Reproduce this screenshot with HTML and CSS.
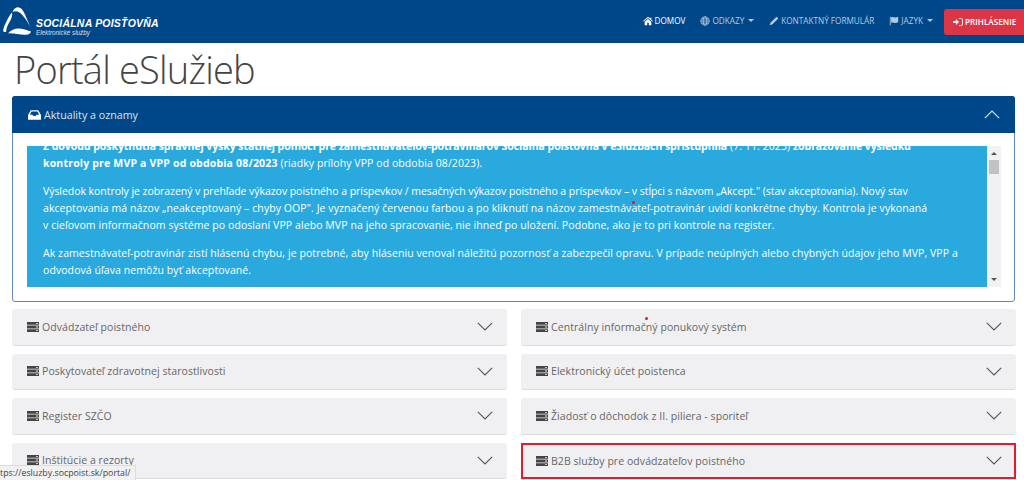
FILE: index.html
```html
<!DOCTYPE html>
<html lang="sk">
<head>
    <meta charset="UTF-8">
    <title>Portál eSlužieb</title>
    <link rel="stylesheet" href="styles.css">
</head>
<body>
    <svg class="icon-defs" width="0" height="0">
        <symbol id="i-server" viewBox="0 0 12 10">
            <path d="M0 0h12v2.800H0zM0 3.600h12v2.800H0zM0 7.200h12V10H0z"/>
            <path fill="#f0f0f2" d="M9 1h2v.8H9zM9 4.600h2v.8H9zM9 8.200h2V9H9z"/>
        </symbol>
    </svg>

    <nav class="navbar">
        <a class="brand" href="#">
            <svg class="brand-mark" viewBox="0 0 28 28" fill="#fff">
                <path d="M14.500.2C18 .2 20 3 22 7.500l5.800 13.700C24.500 14 20 8 16.500 5.500 14 3.800 11.500 3.800 9.500 5 10.500 2.500 12.300.2 14.500.2z"/>
                <path d="M9 5.500C9.800 8 8.500 11.500 6.500 15 4.800 18 3.300 21 3.200 24.500 1.500 25.500.2 25 .2 23.500c0-2.500 2-6.500 4-10.500C5.800 10 7.300 7.300 9 5.500z"/>
                <path d="M5 26.300c3-3 6.500-4.800 10.500-4.800 4.500 0 8.500 2 12.300 2.800.3 1.500-1.500 3.200-5 3.400-5.800.3-11.800-1.800-17.800-1.400z"/>
            </svg>
            <span class="brand-text">
                <span class="brand-name">SOCIÁLNA POISŤOVŇA</span>
                <span class="brand-sub">Elektronické služby</span>
            </span>
        </a>
        <ul class="nav-links">
            <li class="active">
                <svg class="nav-icon" viewBox="0 0 12 10" fill="currentColor"><path d="M6 0 0 5l.6.7L6 1.300l5.400 4.400.6-.7-2-1.700V1H8.800v1L6 0zM2 6v4h3V7.200h2V10h3V6L6 2.600 2 6z"/></svg>
                DOMOV
            </li>
            <li>
                <svg class="nav-icon" viewBox="0 0 12 12" fill="none" stroke="currentColor" stroke-width="1"><circle cx="6" cy="6" r="5"/><ellipse cx="6" cy="6" rx="2.300" ry="5"/><path d="M1 6h10M1.800 3.500h8.400M1.800 8.500h8.400"/></svg>
                ODKAZY <span class="caret"></span>
            </li>
            <li>
                <svg class="nav-icon" viewBox="0 0 12 12" fill="currentColor"><path d="M9 .8 11.200 3 4.200 10 .8 11.200 2 7.800 9 .8z"/></svg>
                KONTAKTNÝ FORMULÁR
            </li>
            <li>
                <svg class="nav-icon" viewBox="0 0 12 12" fill="currentColor"><path d="M1 1h1v10H1zM2.500 1.500c2-1 3.500.4 5 .4 1 0 2.500-.4 3.500-.9v6.500c-1 .6-2.500 1-3.500 1-1.500 0-3-1.300-5-.4z"/></svg>
                JAZYK <span class="caret"></span>
            </li>
        </ul>
        <button class="login">
            <svg class="nav-icon" viewBox="0 0 12 10" fill="currentColor"><path d="M0 3.800h3.500V1.500L7.300 5 3.500 8.500V6.200H0zM7 .5h2.500C11 .5 12 1.500 12 3v4c0 1.500-1 2.500-2.500 2.500H7v-1h2.500c.9 0 1.500-.6 1.500-1.500V3c0-.9-.6-1.500-1.500-1.500H7z"/></svg>
            PRIHLÁSENIE
        </button>
    </nav>

    <main class="page">
        <h1>Portál eSlužieb</h1>

        <section class="news">
            <header class="news-head">
                <span class="news-title">
                    <svg class="news-icon" viewBox="0 0 14 10" fill="#fff"><path d="M3 0h8l3 5v5H0V5l3-5zm.8 1.300L1.900 4.800h2.900l1 1.400h2.400l1-1.400h2.900l-1.900-3.500H3.800z"/></svg>
                    Aktuality a oznamy
                </span>
                <svg class="chevron chevron-light" viewBox="0 0 16 9"><path d="M.8 8.200 8 1l7.200 7.200"/></svg>
            </header>
            <div class="news-body">
                <div class="news-scroll">
                    <div class="news-text">
                        <p class="news-first"><strong class="tight">Z dôvodu poskytnutia správnej výšky štátnej pomoci pre zamestnávateľov-potravinárov Sociálna poisťovňa v eSlužbách sprístupnila</strong> (7. 11. 2023) <strong class="tight">zobrazovanie výsledku</strong><br><strong>kontroly pre MVP a VPP od obdobia 08/2023</strong> (riadky prílohy VPP od obdobia 08/2023).</p>
                        <p><span class="tight">Výsledok kontroly je zobrazený v prehľade výkazov poistného a príspevkov / mesačných výkazov poistného a príspevkov – v stĺpci s názvom „Akcept." (stav akceptovania). Nový stav</span><br>akceptovania má názov „neakceptovaný – chyby OOP". Je vyznačený červenou farbou a po kliknutí na názov zamestnávateľ-potravinár uvidí konkrétne chyby. Kontrola je vykonaná<br>v cieľovom informačnom systéme po odoslaní VPP alebo MVP na jeho spracovanie, nie ihneď po uložení. Podobne, ako je to pri kontrole na register.</p>
                        <p>Ak zamestnávateľ-potravinár zistí hlásenú chybu, je potrebné, aby hláseniu venoval náležitú pozornosť a zabezpečil opravu. V prípade neúplných alebo chybných údajov jeho MVP, VPP a<br>odvodová úľava nemôžu byť akceptované.</p>
                    </div>
                    <div class="scrollbar">
                        <span class="arrow-up"></span>
                        <span class="thumb"></span>
                        <span class="arrow-down"></span>
                    </div>
                </div>
            </div>
        </section>

        <div class="services">
            <div class="service"><span class="service-name"><svg class="service-icon"><use href="#i-server"/></svg>Odvádzateľ poistného</span><svg class="chevron" viewBox="0 0 16 9"><path d="M.8 .8 8 8l7.200-7.200"/></svg></div>
            <div class="service"><span class="service-name"><svg class="service-icon"><use href="#i-server"/></svg>Centrálny informačný ponukový systém</span><svg class="chevron" viewBox="0 0 16 9"><path d="M.8 .8 8 8l7.200-7.200"/></svg></div>
            <div class="service"><span class="service-name"><svg class="service-icon"><use href="#i-server"/></svg>Poskytovateľ zdravotnej starostlivosti</span><svg class="chevron" viewBox="0 0 16 9"><path d="M.8 .8 8 8l7.200-7.200"/></svg></div>
            <div class="service"><span class="service-name"><svg class="service-icon"><use href="#i-server"/></svg>Elektronický účet poistenca</span><svg class="chevron" viewBox="0 0 16 9"><path d="M.8 .8 8 8l7.200-7.200"/></svg></div>
            <div class="service"><span class="service-name"><svg class="service-icon"><use href="#i-server"/></svg>Register SZČO</span><svg class="chevron" viewBox="0 0 16 9"><path d="M.8 .8 8 8l7.200-7.200"/></svg></div>
            <div class="service"><span class="service-name"><svg class="service-icon"><use href="#i-server"/></svg>Žiadosť o dôchodok z II. piliera - sporiteľ</span><svg class="chevron" viewBox="0 0 16 9"><path d="M.8 .8 8 8l7.200-7.200"/></svg></div>
            <div class="service"><span class="service-name"><svg class="service-icon"><use href="#i-server"/></svg>Inštitúcie a rezorty</span><svg class="chevron" viewBox="0 0 16 9"><path d="M.8 .8 8 8l7.200-7.200"/></svg></div>
            <div class="service service-marked"><span class="service-name"><svg class="service-icon"><use href="#i-server"/></svg>B2B služby pre odvádzateľov poistného</span><svg class="chevron" viewBox="0 0 16 9"><path d="M.8 .8 8 8l7.200-7.200"/></svg></div>
        </div>
    </main>

    <span class="dot dot-text"></span>
    <span class="dot dot-card"></span>
    <div class="status-url">tps://esluzby.socpoist.sk/portal/</div>
</body>
</html>
```

FILE: styles.css
```css
html, body {
    height: 480px;
    overflow: hidden;
}
body {
    margin: 0;
    font-family: "Open Sans", "Noto Sans", sans-serif;
    background: #fff;
    color: #444;
}
.icon-defs {
    position: absolute;
}

/* navbar */
.navbar {
    display: flex;
    align-items: center;
    height: 43px;
    padding-left: 3px;
    background: #00478a;
    color: #fff;
}
.brand {
    display: flex;
    align-items: center;
    gap: 5px;
    color: #fff;
    text-decoration: none;
}
.brand-mark {
    width: 28px;
    height: 28px;
    margin-top: -1px;
}
.brand-text {
    display: flex;
    flex-direction: column;
    margin-top: 9px;
}
.brand-name {
    font-family: "Liberation Sans", sans-serif;
    font-size: 10.500px;
    line-height: 12px;
    font-weight: bold;
    font-style: italic;
    letter-spacing: .2px;
}
.brand-sub {
    font-family: "Liberation Sans", sans-serif;
    font-size: 6.300px;
    line-height: 7px;
    font-style: italic;
    color: #d5e0ec;
}
.nav-links {
    display: flex;
    gap: 15px;
    margin: 0 11px 2px auto;
    padding: 0;
    list-style: none;
    font-size: 8.200px;
    color: #b6c9de;
}
.nav-links li {
    display: flex;
    align-items: center;
    gap: 2px;
    white-space: nowrap;
}
.nav-links .active {
    color: #fff;
}
.nav-icon {
    width: 10px;
    height: 10px;
}
.caret {
    width: 0;
    height: 0;
    margin-left: 2px;
    border-style: solid;
    border-width: 3px 3px 0;
    border-color: currentColor transparent transparent;
}
.login {
    display: flex;
    align-items: center;
    gap: 2px;
    height: 26px;
    width: 80px;
    padding: 0 0 0 9px;
    border: 0;
    border-radius: 3px 0 0 3px;
    background: #dc3545;
    color: #fff;
    font-family: inherit;
    font-size: 8.200px;
    font-weight: 600;
    white-space: nowrap;
}

/* page */
.page {
    padding: 0 9px 0 12px;
}
h1 {
    margin: 0;
    height: 53px;
    padding-left: 2px;
    font-size: 38px;
    line-height: 53px;
    font-weight: 300;
    letter-spacing: -.8px;
    color: #444;
}
.news {
    height: 206px;
    box-sizing: border-box;
    border: 1px solid #5f8ab5;
    border-radius: 3px;
}
.news-head {
    display: flex;
    align-items: center;
    justify-content: space-between;
    height: 37px;
    margin: -1px -1px 0;
    padding: 0 15px 0 16px;
    border-radius: 3px 3px 0 0;
    background: #00478a;
    color: #dbe5ef;
    font-size: 10.700px;
}
.news-title {
    display: flex;
    align-items: center;
    gap: 3px;
}
.news-icon {
    width: 13px;
    height: 10px;
}
.news-body {
    padding: 13px 13px 0 14px;
}
.news-scroll {
    display: flex;
    height: 141px;
    overflow: hidden;
}
.news-text {
    flex: 1;
    padding: 0 16px;
    background: #2aa9df;
    color: #fff;
    font-size: 10.500px;
    line-height: 17px;
    letter-spacing: .08px;
    white-space: nowrap;
    overflow: hidden;
}
.news-text p {
    margin: 0 0 11px;
}
.news-text strong {
    letter-spacing: .18px;
}
.news-text .tight {
    letter-spacing: -.05px;
}
.news-text .news-first {
    margin-top: -8px;
}
.scrollbar {
    display: flex;
    flex-direction: column;
    align-items: center;
    width: 14px;
    padding-top: 6px;
    box-sizing: border-box;
    background: #f1f0f2;
}
.arrow-up, .arrow-down {
    width: 0;
    height: 0;
    border-style: solid;
    border-color: transparent;
}
.arrow-up {
    border-width: 0 3px 3px;
    border-bottom-color: #555;
}
.arrow-down {
    margin-top: auto;
    margin-bottom: 6px;
    border-width: 3px 3px 0;
    border-top-color: #555;
}
.thumb {
    width: 10px;
    height: 14px;
    margin-top: 5px;
    background: #c2c1c4;
}

/* service rows */
.services {
    display: grid;
    grid-template-columns: 495px 495px;
    column-gap: 14px;
    row-gap: 8px;
    margin-top: 7px;
}
.service {
    display: flex;
    align-items: center;
    justify-content: space-between;
    height: 36.500px;
    box-sizing: border-box;
    padding: 0 14px 0 15px;
    border-radius: 3px;
    background: #f0f0f2;
    border-bottom: 1px solid #dcdcde;
    font-size: 10.500px;
    letter-spacing: .06px;
    color: #666;
}
.service-name {
    display: flex;
    align-items: center;
    gap: 3px;
}
.service-icon {
    width: 12px;
    height: 10px;
    fill: #444;
}
.service-marked {
    border-radius: 0;
    border-bottom: 0;
    box-shadow: inset 0 0 0 2px #e8192c;
}
.chevron {
    width: 16px;
    height: 9px;
    fill: none;
    stroke: #555;
    stroke-width: 1.100;
}
.chevron-light {
    stroke: #dbe5ef;
}

/* things lying over the page */
.dot {
    position: absolute;
    width: 3px;
    height: 3px;
    border-radius: 50%;
    background: #e8102a;
}
.dot-text {
    left: 632px;
    top: 201px;
}
.dot-card {
    left: 645px;
    top: 317px;
}
.status-url {
    position: absolute;
    left: 0;
    bottom: 0;
    width: 136px;
    height: 15px;
    box-sizing: border-box;
    border: 1px solid #dcdcdc;
    border-width: 1px 1px 0 0;
    background: #f1f1f1;
    font-size: 8.800px;
    line-height: 15px;
    color: #444;
    white-space: nowrap;
    overflow: hidden;
}
```
